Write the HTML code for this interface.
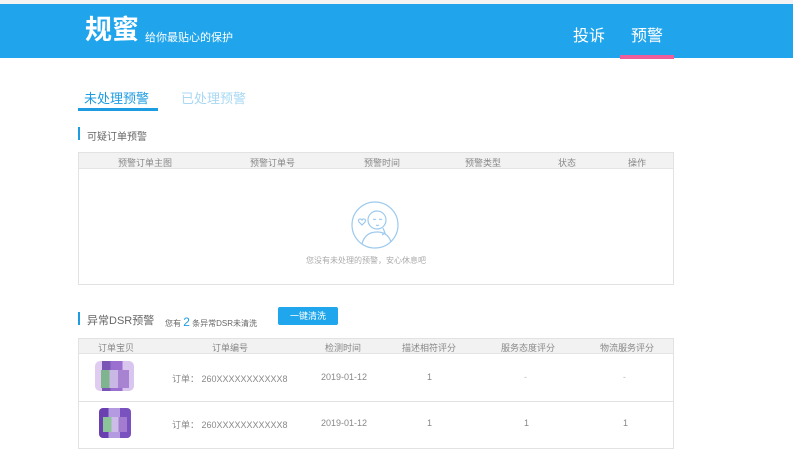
<!DOCTYPE html>
<html><head><meta charset="utf-8"><style>
*{margin:0;padding:0;box-sizing:border-box}
body{width:793px;height:474px;background:#fff;font-family:"Liberation Sans","Noto Sans CJK SC",sans-serif;position:relative;overflow:hidden;color:#666}
.a{position:absolute;white-space:nowrap}
.hdr{position:absolute;left:0;top:4px;width:793px;height:54px;background:#20a5ec}
</style></head><body>
<div class="a" style="top:0;left:0;width:793px;height:4px;background:#f3f3f3"></div>
<div class="hdr"></div>
<div class="a" style="left:85px;top:13px;font-size:27px;color:#fff;line-height:34px;font-weight:bold">规蜜</div>
<div class="a" style="left:145px;top:29px;font-size:11px;color:#fff">给你最贴心的保护</div>
<div class="a" style="left:573px;top:22px;font-size:16px;color:#fff">投诉</div>
<div class="a" style="left:631px;top:22px;font-size:16px;color:#fff">预警</div>
<div class="a" style="left:620px;top:55px;width:54px;height:4px;background:#ee5e9a"></div>

<div class="a" style="left:84px;top:88px;font-size:13px;color:#1d9ce2">未处理预警</div>
<div class="a" style="left:78px;top:108px;width:80px;height:3px;background:#1d9ce2"></div>
<div class="a" style="left:181px;top:88px;font-size:13px;color:#a8d8f3">已处理预警</div>

<div class="a" style="left:78px;top:127px;width:2px;height:13px;background:#1d9ce2"></div>
<div class="a" style="left:87px;top:128px;font-size:10px;color:#666">可疑订单预警</div>

<div class="a" style="left:78px;top:152px;width:596px;height:133px;border:1px solid #e2e2e2"></div>
<div class="a" style="left:79px;top:153px;width:594px;height:16px;background:#f2f2f2;border-bottom:1px solid #e4e4e4"></div>
<div class="a" style="top:156px;font-size:9px;color:#888;left:118px">预警订单主图</div>
<div class="a" style="top:156px;font-size:9px;color:#888;left:250px">预警订单号</div>
<div class="a" style="top:156px;font-size:9px;color:#888;left:364px">预警时间</div>
<div class="a" style="top:156px;font-size:9px;color:#888;left:465px">预警类型</div>
<div class="a" style="top:156px;font-size:9px;color:#888;left:558px">状态</div>
<div class="a" style="top:156px;font-size:9px;color:#888;left:628px">操作</div>
<svg class="a" style="left:350px;top:200px" width="50" height="50" viewBox="0 0 50 50" fill="none" stroke="#9cc9ee" stroke-width="1.2">
<circle cx="25" cy="25" r="23"/><circle cx="27" cy="20" r="9"/><path d="M12 44c2-8 7-12 15-12s12 4 14 10"/><path d="M23 19q2 1 3 0M29 19q2 1 3 0M26 25q2 1 3 0"/><path d="M9 22c-2-3 2-4 3-2 1-2 5-1 3 2l-3 3z"/><path d="M33 28l2 5-3 2"/></svg>
<div class="a" style="left:306px;top:255px;font-size:8px;color:#aaa">您没有未处理的预警，安心休息吧</div>

<div class="a" style="left:78px;top:312px;width:2px;height:13px;background:#1d9ce2"></div>
<div class="a" style="left:87px;top:312px;font-size:11px;color:#666">异常DSR预警</div>
<div class="a" style="left:165px;top:315px;font-size:8px;color:#666">您有 <span style="font-size:12px;color:#1d9ce2">2</span> 条异常DSR未清洗</div>
<div class="a" style="left:278px;top:307px;width:60px;height:18px;background:#1fa6ec;color:#fff;font-size:9px;text-align:center;line-height:18px;border-radius:2px">一键清洗</div>

<div class="a" style="left:78px;top:338px;width:596px;height:111px;border:1px solid #e2e2e2"></div>
<div class="a" style="left:79px;top:339px;width:594px;height:15px;background:#f2f2f2;border-bottom:1px solid #e4e4e4"></div>
<div class="a" style="left:79px;top:401px;width:594px;height:1px;background:#e2e2e2"></div>
<div class="a" style="top:341px;font-size:9px;color:#888;left:98px">订单宝贝</div>
<div class="a" style="top:341px;font-size:9px;color:#888;left:212px">订单编号</div>
<div class="a" style="top:341px;font-size:9px;color:#888;left:325px">检测时间</div>
<div class="a" style="top:341px;font-size:9px;color:#888;left:402px">描述相符评分</div>
<div class="a" style="top:341px;font-size:9px;color:#888;left:501px">服务态度评分</div>
<div class="a" style="top:341px;font-size:9px;color:#888;left:600px">物流服务评分</div>

<div class="a" style="left:95px;top:361px;width:39px;height:30px;border-radius:5px;background:linear-gradient(90deg,#e0ccf0 0 18%,#7a55b5 18% 40%,#9a6fd0 40% 70%,#d9c6ee 70%)"></div>
<div class="a" style="left:101px;top:370px;width:28px;height:18px;background:linear-gradient(90deg,#7fb58e 0 30%,#c9b8e6 30% 60%,#a883d2 60%)"></div>
<div class="a" style="left:99px;top:408px;width:32px;height:30px;border-radius:4px;background:linear-gradient(90deg,#6a3fb0 0 30%,#b49ae0 30% 65%,#7a52c0 65%)"></div>
<div class="a" style="left:103px;top:417px;width:24px;height:15px;background:linear-gradient(90deg,#8cc49a 0 35%,#cdbce8 35% 65%,#a37cd0 65%)"></div>

<div class="a" style="left:172px;top:372px;font-size:9px;color:#888">订单： 260XXXXXXXXXXX8</div>
<div class="a" style="left:321px;top:372px;font-size:9px;color:#888">2019-01-12</div>
<div class="a" style="left:427px;top:372px;font-size:9px;color:#888">1</div>
<div class="a" style="left:524px;top:372px;font-size:9px;color:#bbb">-</div>
<div class="a" style="left:623px;top:372px;font-size:9px;color:#bbb">-</div>
<div class="a" style="left:172px;top:418px;font-size:9px;color:#888">订单： 260XXXXXXXXXXX8</div>
<div class="a" style="left:321px;top:418px;font-size:9px;color:#888">2019-01-12</div>
<div class="a" style="left:427px;top:418px;font-size:9px;color:#888">1</div>
<div class="a" style="left:524px;top:418px;font-size:9px;color:#888">1</div>
<div class="a" style="left:623px;top:418px;font-size:9px;color:#888">1</div>
</body></html>
